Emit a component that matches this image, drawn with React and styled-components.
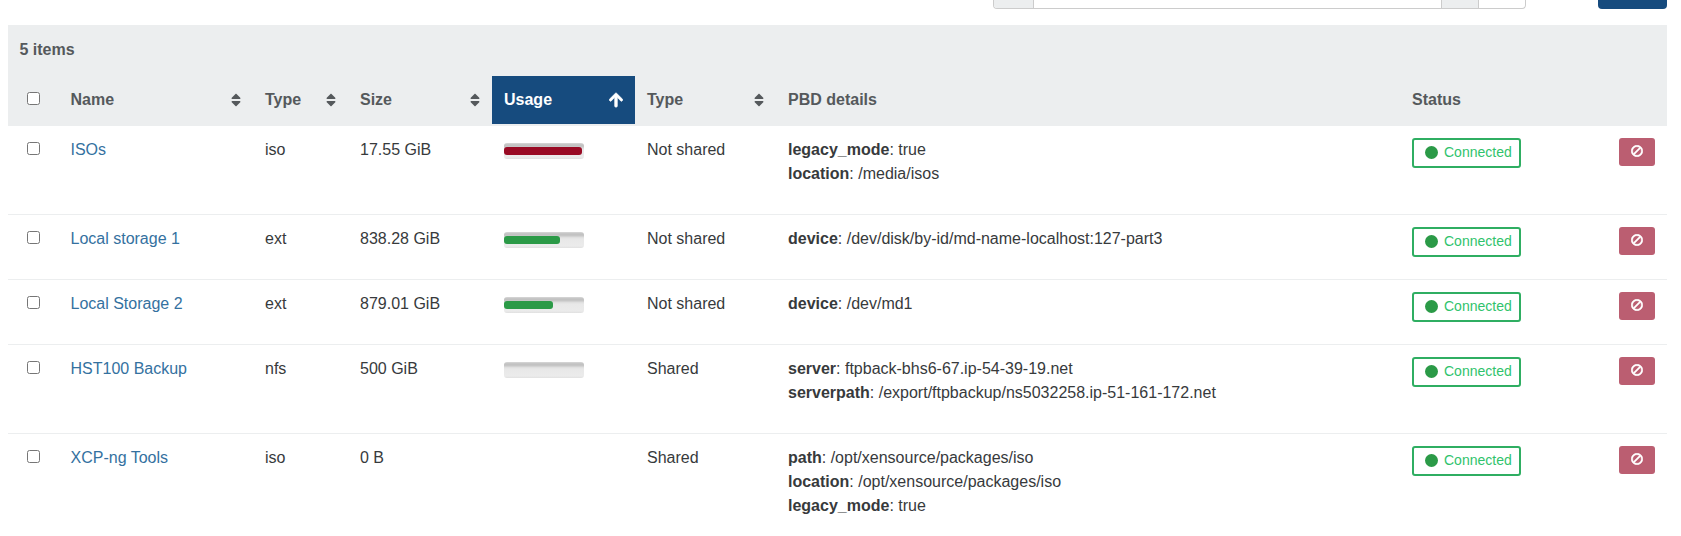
import React from "react";
import styled, { createGlobalStyle } from "styled-components";
import { FaSort, FaArrowUp, FaBan } from "react-icons/fa";

const srs = [
  {
    name: "ISOs",
    type: "iso",
    size: "17.55 GiB",
    usage: 78,
    color: "#990a24",
    shared: "Not shared",
    details: [
      ["legacy_mode", "true"],
      ["location", "/media/isos"],
    ],
  },
  {
    name: "Local storage 1",
    type: "ext",
    size: "838.28 GiB",
    usage: 56,
    color: "#2b9a47",
    shared: "Not shared",
    details: [["device", "/dev/disk/by-id/md-name-localhost:127-part3"]],
  },
  {
    name: "Local Storage 2",
    type: "ext",
    size: "879.01 GiB",
    usage: 49,
    color: "#2b9a47",
    shared: "Not shared",
    details: [["device", "/dev/md1"]],
  },
  {
    name: "HST100 Backup",
    type: "nfs",
    size: "500 GiB",
    usage: 0,
    color: "#2b9a47",
    shared: "Shared",
    details: [
      ["server", "ftpback-bhs6-67.ip-54-39-19.net"],
      ["serverpath", "/export/ftpbackup/ns5032258.ip-51-161-172.net"],
    ],
  },
  {
    name: "XCP-ng Tools",
    type: "iso",
    size: "0 B",
    shared: "Shared",
    details: [
      ["path", "/opt/xensource/packages/iso"],
      ["location", "/opt/xensource/packages/iso"],
      ["legacy_mode", "true"],
    ],
  },
];

const columns = [
  { label: "Name", sortable: true },
  { label: "Type", sortable: true },
  { label: "Size", sortable: true },
  { label: "Usage", sortable: true, active: true },
  { label: "Type", sortable: true },
  { label: "PBD details" },
  { label: "Status" },
];

const widths = [50.5, 194.5, 95, 144, 143, 141, 624, 207, 60];

const App = () => {
  return (
    <>
      <GlobalStyle />
      <Toolbar>
        <SearchBox>
          <Addon $width={39} />
          <SearchInput />
          <Addon $width={36} $left />
          <SearchEnd />
        </SearchBox>
        <PrimaryButton />
      </Toolbar>
      <Table>
        <colgroup>
          {widths.map((w, i) => (
            <ColWidth key={i} style={{ width: w }} />
          ))}
        </colgroup>
        <thead>
          <tr>
            <ItemCount colSpan={9}>5 items</ItemCount>
          </tr>
          <tr>
            <Head>
              <Check type="checkbox" />
            </Head>
            {columns.map((c, i) => (
              <Head key={i} $active={c.active}>
                <HeadInner>
                  {c.label}
                  {c.active ? <UpArrow /> : c.sortable ? <SortIcon /> : null}
                </HeadInner>
              </Head>
            ))}
            <Head />
          </tr>
        </thead>
        <tbody>
          {srs.map((sr) => (
            <Row key={sr.name}>
              <Cell>
                <Check type="checkbox" />
              </Cell>
              <Cell>
                <NameLink href="#">{sr.name}</NameLink>
              </Cell>
              <Cell>{sr.type}</Cell>
              <Cell>{sr.size}</Cell>
              <Cell>
                {sr.usage !== undefined && (
                  <Meter>
                    <MeterFill
                      $color={sr.color}
                      style={{ width: sr.usage }}
                    />
                  </Meter>
                )}
              </Cell>
              <Cell>{sr.shared}</Cell>
              <Cell>
                <Details>
                  {sr.details.map(([key, value]) => (
                    <Detail key={key}>
                      <strong>{key}</strong>: {value}
                    </Detail>
                  ))}
                </Details>
              </Cell>
              <Cell>
                <StatusBadge>
                  <Dot />
                  Connected
                </StatusBadge>
              </Cell>
              <Cell>
                <DangerButton>
                  <BanIcon />
                </DangerButton>
              </Cell>
            </Row>
          ))}
        </tbody>
      </Table>
    </>
  );
};

const GlobalStyle = createGlobalStyle`
  html, body {
    overflow: hidden;
  }
  body {
    margin: 0 14px 0 8px;
    background: #fff;
    font-family: "Liberation Sans", Arial, sans-serif;
    font-size: 16px;
    line-height: 24px;
    color: #373a3c;
  }
`;

const Toolbar = styled.div`
  height: 25px;
  display: flex;
  justify-content: flex-end;
  align-items: flex-start;
  gap: 72px;
`;

const SearchBox = styled.div`
  width: 531px;
  height: 8px;
  display: flex;
  border: 1px solid #ccc;
  border-top: 0;
  border-radius: 0 0 4px 4px;
  overflow: hidden;
`;

const Addon = styled.div`
  width: ${(p) => p.$width}px;
  background: #eceeef;
  border-right: 1px solid #ccc;
  border-left: ${(p) => (p.$left ? "1px solid #ccc" : "0")};
`;

const SearchInput = styled.div`
  flex: 1;
`;

const SearchEnd = styled.div`
  width: 46px;
`;

const PrimaryButton = styled.div`
  width: 69px;
  height: 9px;
  background: #164b7e;
  border-radius: 0 0 4px 4px;
`;

const Table = styled.table`
  width: 1659px;
  table-layout: fixed;
  border-collapse: separate;
  border-spacing: 0;
`;

const ColWidth = styled.col``;

const ItemCount = styled.th`
  height: 51px;
  box-sizing: border-box;
  padding: 13px 11.5px 12px;
  vertical-align: top;
  text-align: left;
  font-weight: 700;
  color: #55595c;
  background: #eceeef;
`;

const Head = styled.th`
  height: 50px;
  box-sizing: border-box;
  padding: 12px;
  vertical-align: top;
  text-align: left;
  font-weight: 700;
  color: ${(p) => (p.$active ? "#fff" : "#55595c")};
  background: ${(p) => (p.$active ? "#164b7e" : "#eceeef")};
  border-bottom: 2px solid #eceeef;
`;

const HeadInner = styled.div`
  display: flex;
  justify-content: space-between;
  align-items: center;
  height: 24px;
`;

const SortIcon = styled(FaSort)`
  width: 10px;
  height: 16px;
`;

const UpArrow = styled(FaArrowUp)`
  width: 14px;
  height: 16px;
  stroke: currentColor;
  stroke-width: 24;
`;

const BanIcon = styled(FaBan)`
  width: 12px;
  height: 12px;
  transform: scaleX(-1);
  stroke: currentColor;
  stroke-width: 20;
`;

const Row = styled.tr`
  &:not(:first-child) td {
    border-top: 1px solid #eceeef;
  }
`;

const Cell = styled.td`
  padding: 12px;
  vertical-align: top;
`;

const Check = styled.input`
  display: block;
  margin: 4px auto 0;
  width: 13px;
  height: 13px;
`;

const NameLink = styled.a`
  color: #34719f;
  text-decoration: none;
`;

const Meter = styled.div`
  width: 80px;
  height: 16px;
  margin-top: 5px;
  padding-top: 4px;
  box-sizing: border-box;
  border-radius: 3px;
  background: linear-gradient(
    #d8d8d8 0,
    #c0c0c0 2px,
    #c8c8c8 4px,
    #dcdcdc 5px,
    #e8e8e8 7px,
    #ebebeb 14px,
    #e0e0e0 16px
  );
`;

const MeterFill = styled.div`
  height: 8px;
  border-radius: 3px;
  background: ${(p) => p.$color};
`;

const Details = styled.div`
  margin-bottom: 16px;
`;

const Detail = styled.div`
  strong {
    font-weight: 700;
  }
`;

const StatusBadge = styled.span`
  display: inline-flex;
  align-items: center;
  gap: 6px;
  box-sizing: border-box;
  width: 109px;
  height: 30px;
  padding: 0 0 2px 11px;
  vertical-align: top;
  border: 2px solid #2fae62;
  border-radius: 3px;
  font-size: 14px;
  color: #30c36c;
`;

const Dot = styled.span`
  width: 13px;
  height: 13px;
  border-radius: 50%;
  background: #2b9a47;
`;

const DangerButton = styled.button`
  display: flex;
  align-items: center;
  justify-content: center;
  width: 36px;
  height: 28px;
  margin-left: auto;
  padding: 0 0 2px;
  border: 0;
  border-radius: 3px;
  background: #bb5e71;
  color: #fff;
`;

export default App;
